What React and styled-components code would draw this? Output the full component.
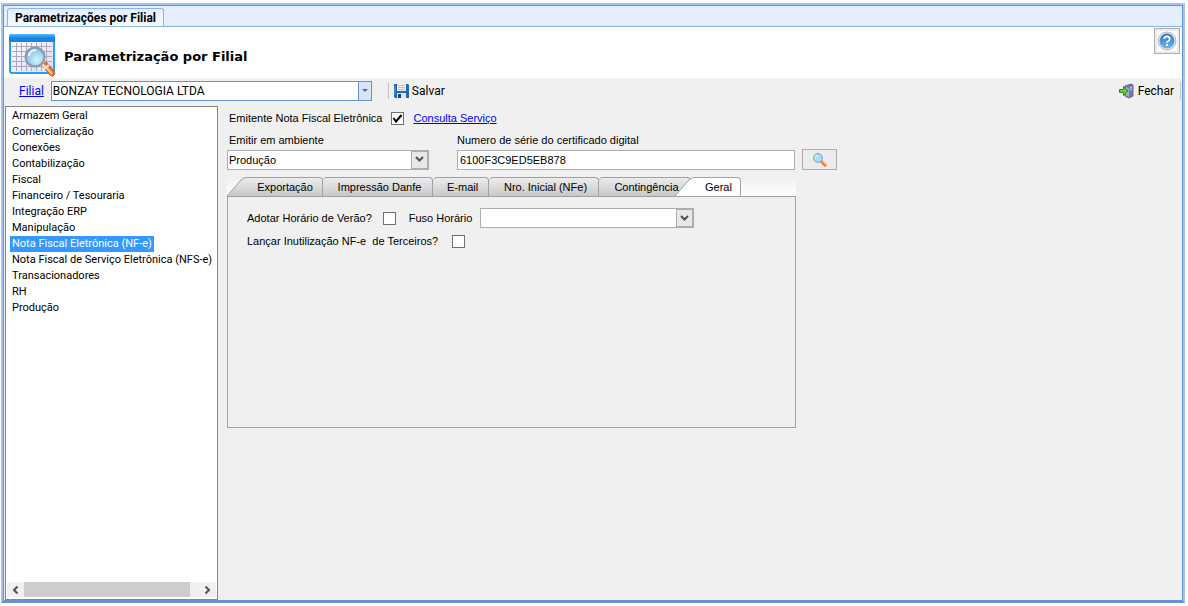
import { createGlobalStyle } from "styled-components";
import styled from "styled-components";

const modules = [
  "Armazem Geral",
  "Comercialização",
  "Conexões",
  "Contabilização",
  "Fiscal",
  "Financeiro / Tesouraria",
  "Integração ERP",
  "Manipulação",
  "Nota Fiscal Eletrônica (NF-e)",
  "Nota Fiscal de Serviço Eletrônica (NFS-e)",
  "Transacionadores",
  "RH",
  "Produção",
];

const tabs = [
  { name: "Exportação", width: 96, slant: true },
  { name: "Impressão Danfe", width: 110 },
  { name: "E-mail", width: 56 },
  { name: "Nro. Inicial (NFe)", width: 110 },
  { name: "Contingência", width: 92 },
  { name: "Geral", width: 66, slant: true, active: true },
];

export default function App() {
  return (
    <Page>
      <GlobalStyle />
      <Window>
        <WindowTabs>
          <WindowTab>Parametrizações por Filial</WindowTab>
        </WindowTabs>
        <Header>
          <CalendarIcon />
          <h1>Parametrização por Filial</h1>
          <HelpButton aria-label="Ajuda">
            <HelpIcon />
          </HelpButton>
        </Header>
        <Toolbar>
          <a href="#filial" id="filial-label">
            Filial
          </a>
          <Combo $blue $width="321px">
            <select id="filial" aria-labelledby="filial-label">
              <option>BONZAY TECNOLOGIA LTDA</option>
            </select>
            <Arrow $blue>
              <svg width="6" height="4" viewBox="0 0 6 4">
                <path d="M0 0h6L3 3z" fill="#4a6f9f" />
              </svg>
            </Arrow>
          </Combo>
          <Divider />
          <ToolButton>
            <SaveIcon />
            Salvar
          </ToolButton>
          <Spacer />
          <ToolButton>
            <ExitIcon />
            Fechar
          </ToolButton>
          <Grip />
        </Toolbar>
        <Body>
          <Sidebar>
            <ModuleList>
              {modules.map((name) => (
                <li key={name}>
                  <ModuleButton $selected={name === "Nota Fiscal Eletrônica (NF-e)"}>
                    {name}
                  </ModuleButton>
                </li>
              ))}
            </ModuleList>
            <ScrollBar>
              <ScrollButton aria-label="Rolar para a esquerda">
                <svg width="7" height="8" viewBox="0 0 7 8">
                  <path d="M5.5 0.5L2 4l3.500 3.500" fill="none" stroke="#505050" strokeWidth="2" />
                </svg>
              </ScrollButton>
              <ScrollThumb />
              <ScrollButton aria-label="Rolar para a direita">
                <svg width="7" height="8" viewBox="0 0 7 8">
                  <path d="M1.500 0.500L5 4l-3.500 3.500" fill="none" stroke="#505050" strokeWidth="2" />
                </svg>
              </ScrollButton>
            </ScrollBar>
          </Sidebar>
          <Content>
            <Row>
              <label htmlFor="emitente">Emitente Nota Fiscal Eletrônica</label>
              <CheckBox id="emitente" gap={9} defaultChecked />
              <ServiceLink href="#servico">Consulta Serviço</ServiceLink>
            </Row>
            <Fields>
              <label htmlFor="ambiente">Emitir em ambiente</label>
              <label htmlFor="serie">Numero de série do certificado digital</label>
              <span />
              <Combo $width="202px">
                <select id="ambiente">
                  <option>Produção</option>
                </select>
                <Arrow>
                  <Chevron />
                </Arrow>
              </Combo>
              <TextInput id="serie" defaultValue="6100F3C9ED5EB878" />
              <SearchButton aria-label="Procurar certificado">
                <SearchIcon />
              </SearchButton>
            </Fields>
            <TabControl>
              <TabStrip role="tablist">
                {tabs.map((tab) => (
                  <Tab
                    key={tab.name}
                    role="tab"
                    aria-selected={!!tab.active}
                    $width={tab.width}
                    $slant={tab.slant}
                    $active={tab.active}
                  >
                    {tab.slant && <Slant active={tab.active} />}
                    {tab.name}
                  </Tab>
                ))}
              </TabStrip>
              <TabPanel role="tabpanel">
                <Row>
                  <label htmlFor="verao">Adotar Horário de Verão?</label>
                  <CheckBox id="verao" gap={11} />
                  <FusoLabel htmlFor="fuso">Fuso Horário</FusoLabel>
                  <Combo $width="214px">
                    <select id="fuso">
                      <option></option>
                    </select>
                    <Arrow>
                      <Chevron />
                    </Arrow>
                  </Combo>
                </Row>
                <Row>
                  <label htmlFor="terceiros">Lançar Inutilização NF-e &nbsp;de Terceiros?</label>
                  <CheckBox id="terceiros" gap={14} />
                </Row>
              </TabPanel>
            </TabControl>
          </Content>
        </Body>
      </Window>
    </Page>
  );
}

function CheckBox({ gap, ...props }) {
  return (
    <Check $gap={gap}>
      <input type="checkbox" {...props} />
      <svg width="11" height="11" viewBox="0 0 11 11">
        <path d="M1.500 5L4 8.500 9.500 2" fill="none" stroke="#000" strokeWidth="2" />
      </svg>
    </Check>
  );
}

function Chevron() {
  return (
    <svg width="9" height="7" viewBox="0 0 9 7">
      <path d="M1 1l3.500 3.500L8 1" fill="none" stroke="#505050" strokeWidth="2" />
    </svg>
  );
}

function Slant({ active }) {
  return (
    <SlantSvg width="20" height="19" viewBox="0 0 20 19">
      <defs>
        <linearGradient id="tabShade" x1="0" y1="0" x2="0" y2="1">
          <stop offset="0" stopColor="#ececec" />
          <stop offset="1" stopColor="#c8c8c8" />
        </linearGradient>
      </defs>
      <path d="M0 19L14 3Q16.500 0.500 20 0.500V19z" fill={active ? "#fff" : "url(#tabShade)"} />
      <path d="M0 19L14 3Q16.500 0.500 20 0.500" fill="none" stroke="#a0a0a0" />
    </SlantSvg>
  );
}

function CalendarIcon() {
  return (
    <svg width="48" height="44" viewBox="0 0 48 44">
      <defs>
        <linearGradient id="calTop" x1="0" y1="0" x2="0" y2="1">
          <stop offset="0" stopColor="#5bb8f8" />
          <stop offset="0.500" stopColor="#1a86e0" />
          <stop offset="1" stopColor="#1583e8" />
        </linearGradient>
        <linearGradient id="calPage" x1="0" y1="0" x2="1" y2="1">
          <stop offset="0" stopColor="#fff" />
          <stop offset="1" stopColor="#d9dcf5" />
        </linearGradient>
        <radialGradient id="calLens" cx="0.600" cy="0.650" r="0.600">
          <stop offset="0" stopColor="#d6f3fb" />
          <stop offset="1" stopColor="#7fc0e4" />
        </radialGradient>
      </defs>
      <rect x="1" y="1" width="44" height="38" rx="2" fill="url(#calPage)" stroke="#27a0f0" strokeWidth="2" />
      <path d="M0 8V2Q0 0 2 0h42q2 0 2 2v6z" fill="url(#calTop)" />
      <path
        d="M3 12.500h40M3 17.500h40M3 22.500h40M3 27.500h40M3 32.500h40M7.500 9v28M12.500 9v28M17.500 9v28M22.500 9v28M27.500 9v28M32.500 9v28M37.500 9v28"
        stroke="#aaa9bd"
      />
      <path d="M33 31l4-3 8 9q2 3-1 5-2 0-3-1z" fill="#f0752c" stroke="#c65418" />
      <path d="M36 32l7 8" stroke="#ffd07a" strokeWidth="2" />
      <path d="M32 29l4 4M35 35l5-4" stroke="#e8e8ee" strokeWidth="2" />
      <circle cx="26" cy="23" r="9.500" fill="url(#calLens)" stroke="#8e98a6" strokeWidth="2" />
      <path d="M20 22q1-6 7-6" fill="none" stroke="#effbff" strokeWidth="2" />
    </svg>
  );
}

function HelpIcon() {
  return (
    <svg width="20" height="20" viewBox="0 0 20 20">
      <defs>
        <linearGradient id="helpBlue" x1="0" y1="0" x2="0" y2="1">
          <stop offset="0" stopColor="#2f78cf" />
          <stop offset="1" stopColor="#69b5f5" />
        </linearGradient>
      </defs>
      <circle cx="10" cy="10" r="9" fill="#e4e6ea" stroke="#b4b8c0" />
      <circle cx="10" cy="10" r="7.500" fill="url(#helpBlue)" />
      <path d="M7.300 8q0-2.700 2.700-2.700T12.700 8q0 1.300-1.400 2T10 11.800" fill="none" stroke="#fff" strokeWidth="1.800" />
      <rect x="9" y="13" width="2" height="2" fill="#fff" />
    </svg>
  );
}

function SaveIcon() {
  return (
    <svg width="15" height="15" viewBox="0 0 15 15">
      <path d="M0 1h14l1 1v13H1l-1-1z" fill="#2467ad" />
      <path d="M3 0h9v8H3z" fill="#f1f1ee" />
      <path d="M4 2.500h7M4 4.500h7M4 6.500h7" stroke="#c3c3bd" />
      <path d="M3 10h9v5H3z" fill="#dbe6f2" />
      <path d="M4 11h3v4H4z" fill="#174a85" />
      <path d="M1 3v9" stroke="#5a9ade" />
    </svg>
  );
}

function ExitIcon() {
  return (
    <svg width="16" height="16" viewBox="0 0 16 16">
      <path d="M6 3l6-2 2 1v11l-4 2-4-2z" fill="#7779a8" stroke="#66678f" />
      <path d="M7 4l3 1v9l-3-1.500z" fill="#a5a7cf" />
      <path d="M11 5l2-1M11 7l2-1" stroke="#dadbf0" />
      <path d="M0.500 6.500h4v-3L9 8l-4.500 4.500v-3h-4z" fill="#5fcc3c" stroke="#2c8f1c" />
    </svg>
  );
}

function SearchIcon() {
  return (
    <svg width="16" height="16" viewBox="0 0 16 16">
      <path d="M9 9l5 5" stroke="#e8792f" strokeWidth="3" />
      <path d="M10 9l4 4" stroke="#ffc070" />
      <circle cx="6" cy="6" r="4.500" fill="#a9dcf4" stroke="#7ea6c8" />
      <path d="M3.500 6q0-2.500 2.500-2.500" fill="none" stroke="#eefaff" />
    </svg>
  );
}

const sans = `"Liberation Sans", Arial, sans-serif`;
const narrow = `Roboto, "Liberation Sans", sans-serif`;

const GlobalStyle = createGlobalStyle`
  * {
    box-sizing: border-box;
  }
  body {
    margin: 0;
    background: #fff;
    color: #000;
    font: 11px/16px ${sans};
  }
  button, input, select {
    margin: 0;
    padding: 0;
    color: inherit;
    font: inherit;
  }
  a {
    color: #0000ff;
  }
  svg {
    display: block;
    flex: none;
  }
`;

const Page = styled.div`
  display: flex;
  min-height: 100vh;
  padding: 3px 3px 3px 1px;
`;

const Window = styled.div`
  display: flex;
  flex: 1;
  flex-direction: column;
  border: 2px solid #a3c3f0;
  border-bottom-color: #6593cf;
  outline: 1px solid #6593cf;
  outline-offset: -3px;
  padding: 1px;
  background: #f0f0f0;
`;

const WindowTabs = styled.div`
  display: flex;
  align-items: flex-end;
  height: 21px;
  padding-left: 3px;
  border-bottom: 1px solid #8db2e3;
  background: #e3efff;
`;

const WindowTab = styled.div`
  height: 18px;
  padding: 0 7px;
  border: 1px solid #8db2e3;
  border-bottom: 0;
  border-radius: 3px 3px 0 0;
  background: linear-gradient(#e3efff, #f8fbff);
  font: bold 12px/18px ${narrow};
`;

const Header = styled.header`
  display: flex;
  align-items: center;
  height: 51px;
  padding: 0 2px 0 5px;
  background: #fff;
  > svg {
    margin-top: 6px;
  }
  h1 {
    flex: 1;
    margin: 8px 0 0 7px;
    font: bold 13px/16px "DejaVu Sans", Verdana, sans-serif;
  }
`;

const HelpButton = styled.button`
  display: grid;
  place-items: center;
  align-self: flex-start;
  width: 26px;
  height: 26px;
  margin-top: 1px;
  border: 1px solid #adadad;
  background: #fff;
  box-shadow: inset 0 0 0 2px #ececec;
`;

const Toolbar = styled.div`
  display: flex;
  align-items: center;
  height: 25px;
  padding: 0 1px 0 15px;
  font: 12px/16px ${narrow};
`;

const Combo = styled.div`
  display: flex;
  width: ${(props) => props.$width};
  height: 20px;
  border: 1px solid ${(props) => (props.$blue ? "#6593cf" : "#abadb3")};
  margin-left: ${(props) => (props.$blue ? "7px" : "0")};
  background: #fff;
  position: relative;
  select {
    width: 100%;
    padding: 0 18px 0 1px;
    border: 0;
    outline: 0;
    appearance: none;
    background: transparent;
  }
`;

const Arrow = styled.span`
  display: grid;
  place-items: center;
  position: absolute;
  top: 0;
  right: 0;
  bottom: 0;
  width: ${(props) => (props.$blue ? "13px" : "17px")};
  border: 1px solid #abadb3;
  background: #e8e8e8;
  pointer-events: none;
  ${(props) =>
    props.$blue &&
    `
    border-width: 0 0 0 1px;
    border-color: #6593cf;
    background: #d6e5f8;
  `}
`;

const Divider = styled.div`
  width: 1px;
  height: 16px;
  margin: 0 5px 0 16px;
  background: #c0c0c0;
`;

const Grip = styled.div`
  width: 1px;
  height: 18px;
  margin-left: 6px;
  background: #c8c8c8;
`;

const Spacer = styled.div`
  flex: 1;
`;

const ToolButton = styled.button`
  display: flex;
  align-items: center;
  gap: 3px;
  border: 0;
  background: none;
`;

const Body = styled.main`
  display: flex;
  flex: 1;
  padding-left: 1px;
`;

const Sidebar = styled.nav`
  display: flex;
  flex-direction: column;
  flex: none;
  width: 213px;
  margin-top: 3px;
  padding: 1px 1px 2px;
  border: 1px solid #828790;
  background: #fff;
  font-family: ${narrow};
`;

const ModuleList = styled.ul`
  flex: 1;
  margin: 0;
  padding: 0 3px;
  list-style: none;
`;

const ModuleButton = styled.button`
  display: block;
  height: 16px;
  padding: 0 2px;
  border: 0;
  white-space: nowrap;
  background: ${(props) => (props.$selected ? "#3399ff" : "none")};
  color: ${(props) => (props.$selected ? "#fff" : "#000")};
`;

const ScrollBar = styled.div`
  display: flex;
  height: 15px;
  background: #f0f0f0;
`;

const ScrollButton = styled.button`
  display: grid;
  place-items: center;
  width: 17px;
  border: 0;
  background: none;
  &:last-child {
    margin-left: auto;
  }
`;

const ScrollThumb = styled.div`
  width: 166px;
  background: #cdcdcd;
`;

const Content = styled.section`
  flex: 1;
  padding: 5px 0 0 9px;
`;

const Row = styled.div`
  display: flex;
  align-items: center;
  min-height: 20px;
  padding-left: 2px;
`;

const Check = styled.span`
  display: grid;
  place-items: center;
  margin-left: ${(props) => props.$gap}px;
  input,
  svg {
    grid-area: 1 / 1;
  }
  input {
    width: 13px;
    height: 13px;
    border: 1px solid #707070;
    appearance: none;
    background: #fff;
  }
  svg {
    visibility: hidden;
    pointer-events: none;
  }
  input:checked + svg {
    visibility: visible;
  }
`;

const ServiceLink = styled.a`
  margin-left: 9px;
`;

const Fields = styled.div`
  display: grid;
  grid-template-columns: 230px 338px 42px;
  align-items: center;
  row-gap: 1px;
  margin-top: 4px;
  label:first-child {
    padding-left: 2px;
  }
`;

const TextInput = styled.input`
  height: 20px;
  padding: 0 2px;
  border: 1px solid #abadb3;
  background: #fff;
`;

const SearchButton = styled.button`
  display: grid;
  place-items: center;
  height: 21px;
  margin-left: 7px;
  width: 35px;
  border: 1px solid #adadad;
  background: #ececec;
`;

const TabControl = styled.div`
  width: 569px;
  margin-top: 7px;
`;

const TabStrip = styled.div`
  display: flex;
  height: 19px;
  background: linear-gradient(#f0f0f0, #fff);
`;

const Tab = styled.button`
  position: relative;
  width: ${(props) => props.$width}px;
  height: 19px;
  padding: 0 10px 0 14px;
  border: 1px solid #a0a0a0;
  border-left: 0;
  border-bottom: 0;
  border-radius: 4px 4px 0 0;
  background: linear-gradient(#ececec, #c8c8c8);
  white-space: nowrap;
  ${(props) =>
    props.$slant &&
    `
    width: ${props.$width - 20}px;
    margin-left: 20px;
    padding: 0 9px 0 10px;
    border-radius: 0 4px 0 0;
  `}
  ${(props) =>
    props.$active &&
    `
    margin-left: 4px;
    background: #fff;
  `}
`;

const SlantSvg = styled.svg`
  position: absolute;
  top: -1px;
  right: 100%;
`;

const TabPanel = styled.div`
  display: flex;
  flex-direction: column;
  gap: 3px;
  height: 232px;
  padding: 11px 17px;
  border: 1px solid #a0a0a0;
`;

const FusoLabel = styled.label`
  margin: 0 8px 0 13px;
`;
